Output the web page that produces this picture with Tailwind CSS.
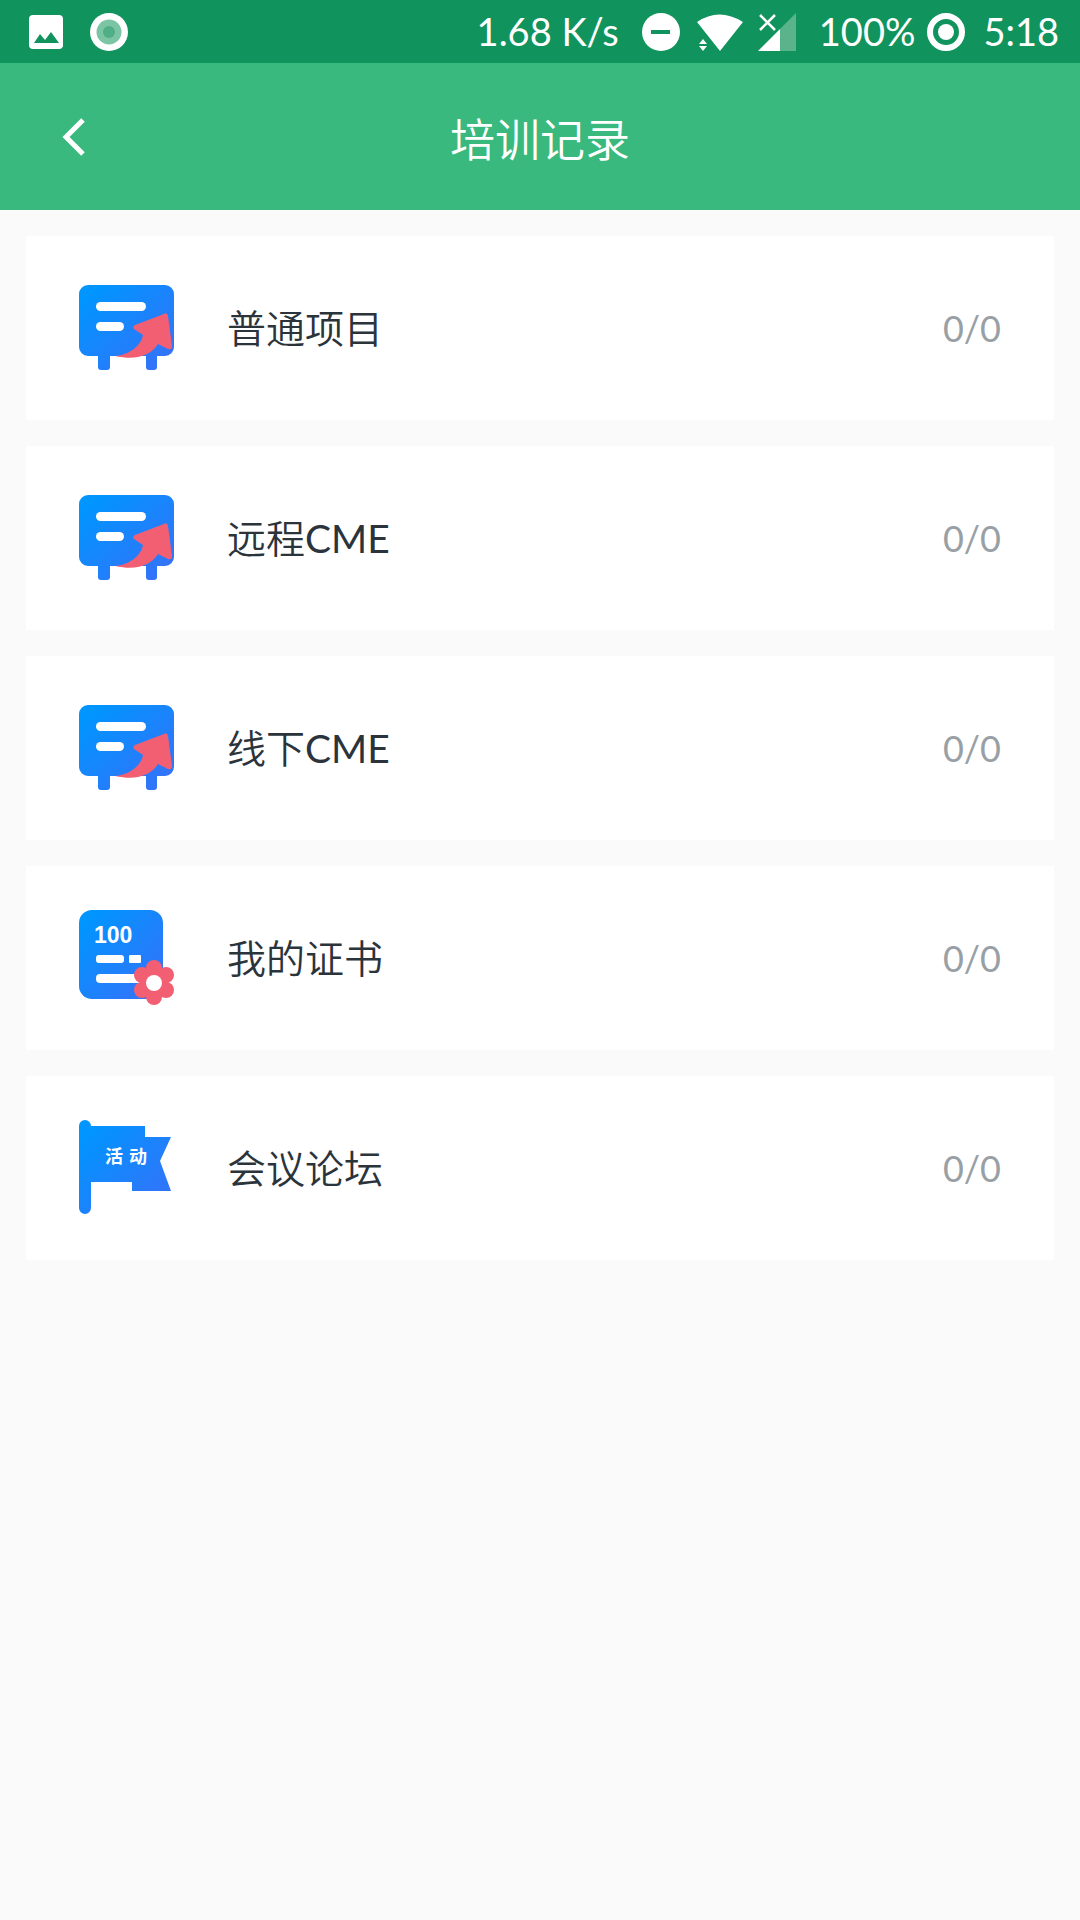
<!DOCTYPE html>
<html lang="zh-CN">
<head>
<meta charset="utf-8">
<meta name="viewport" content="width=device-width, initial-scale=1">
<title>培训记录</title>
<script src="https://cdn.jsdelivr.net/npm/@tailwindcss/browser@4"></script>
</head>
<body class="min-h-screen bg-[#fafafa] font-['Lato','Noto_Sans_CJK_SC',sans-serif] text-[#2b333b]">
<svg class="absolute size-0" aria-hidden="true">
  <defs>
    <linearGradient id="blue" x1="0" y1="0" x2="1" y2="1"><stop offset="0.1" stop-color="#0095ff"/><stop offset="1" stop-color="#3a6ff8"/></linearGradient>
    <symbol id="board" viewBox="0 0 96 96">
      <path fill="url(#blue)" d="M9 5H86a9 9 0 0 1 9 9V67a9 9 0 0 1-9 9H78V87a3 3 0 0 1-3 3H70a3 3 0 0 1-3-3V76H31V87a3 3 0 0 1-3 3H22a3 3 0 0 1-3-3V76H9a9 9 0 0 1-9-9V14A9 9 0 0 1 9 5Z"/>
      <rect x="17" y="22" width="50" height="9" rx="4.500" fill="#fff"/>
      <rect x="17" y="42" width="28" height="9" rx="4.500" fill="#fff"/>
      <path fill="#f35f72" d="M85 34Q88 32 89 36L93 66Q93 70 89 69L79 64C72 75 58 81 36 76C50 75 62 66 64 55L55 49Q53 47 56 45Z"/>
    </symbol>
  </defs>
</svg>

<header class="text-white">
  <div class="flex h-[63px] items-center justify-between bg-[#11935d] pr-[21px] pl-7 text-[38px] leading-[63px]">
    <div class="flex items-center gap-[26px]">
      <svg class="size-9" viewBox="0 0 36 36" aria-label="图片"><rect x="1" y="1" width="34" height="34" rx="4" fill="#fff"/><path fill="#11935d" d="M6 29 12 20 17 26 23 18 31 29Z"/></svg>
      <svg class="size-[38px]" viewBox="0 0 38 38" aria-hidden="true"><circle cx="19" cy="19" r="19" fill="#fff"/><circle cx="19" cy="19" r="12.500" fill="#7cc5a4"/><circle cx="19" cy="19" r="6" fill="#4fae86"/></svg>
    </div>
    <div class="flex items-center">
      <span>1.68 K/s</span>
      <svg class="ml-[23px] size-[38px]" viewBox="0 0 38 38" aria-label="请勿打扰"><circle cx="19" cy="19" r="19" fill="#fff"/><path fill="#11935d" d="M9 17H28V21H9Z"/></svg>
      <svg class="ml-[17px] h-[38px] w-[46px]" viewBox="0 0 46 38" aria-label="无线网络"><path fill="#fff" d="M0 9Q22-6 46 9L23 38ZM6 26 10 31H2ZM2 33H10L6 38Z"/></svg>
      <svg class="ml-[15px] h-[38px] w-[38px]" viewBox="0 0 38 38" aria-label="无信号"><path fill="#5bb38c" d="M38 0V38H22V16Z"/><path fill="#fff" d="M0 38 22 16V38Z"/><path stroke="#fff" stroke-width="2.500" d="M2 2 17 17M17 2 2 17"/></svg>
      <span class="ml-[23px]">100%</span>
      <svg class="ml-3 size-[38px]" viewBox="0 0 38 38" aria-label="电池"><circle cx="19" cy="19" r="16" fill="none" stroke="#fff" stroke-width="6"/><circle cx="19" cy="19" r="8" fill="#fff"/></svg>
      <time class="ml-[18px]">5:18</time>
    </div>
  </div>
  <div class="grid h-[147px] grid-cols-[147px_1fr_147px] items-center bg-[#39b97e]">
    <button type="button" aria-label="返回" class="flex size-[147px] items-center justify-center">
      <svg class="size-12" viewBox="0 0 48 48" fill="none" stroke="#fff" stroke-width="5"><path d="M33 7 16 24 33 41"/></svg>
    </button>
    <h1 class="pt-2 text-center text-[45px] font-[350]">培训记录</h1>
  </div>
</header>

<main class="flex flex-col gap-[26px] p-[26px] text-[39px]">
  <a href="#common" class="flex h-[184px] items-center gap-[52px] bg-white px-[53px]">
    <svg class="size-24"><use href="#board"/></svg>
    <span class="flex-1 font-[350]">普通项目</span><span class="text-[36px] text-[#98a0a6]">0/0</span>
  </a>
  <a href="#remote" class="flex h-[184px] items-center gap-[52px] bg-white px-[53px]">
    <svg class="size-24"><use href="#board"/></svg>
    <span class="flex-1"><span class="font-[350]">远程</span>CME</span><span class="text-[36px] text-[#98a0a6]">0/0</span>
  </a>
  <a href="#offline" class="flex h-[184px] items-center gap-[52px] bg-white px-[53px]">
    <svg class="size-24"><use href="#board"/></svg>
    <span class="flex-1"><span class="font-[350]">线下</span>CME</span><span class="text-[36px] text-[#98a0a6]">0/0</span>
  </a>
  <a href="#certificates" class="flex h-[184px] items-center gap-[52px] bg-white px-[53px]">
    <svg class="size-24" viewBox="0 0 96 96">
      <rect width="84" height="89" rx="13" fill="url(#blue)"/>
      <text x="15" y="33" fill="#fff" font-family="Liberation Sans, sans-serif" font-weight="700" font-size="23">100</text>
      <g fill="#fff"><rect x="17" y="45" width="28" height="8" rx="3"/><rect x="50" y="45" width="12" height="8" rx="1"/><rect x="17" y="64" width="50" height="9" rx="4"/></g>
      <g fill="#f35f72"><circle cx="75" cy="73" r="14"/><circle cx="75" cy="58" r="8"/><circle cx="87" cy="65" r="8"/><circle cx="87" cy="80" r="8"/><circle cx="75" cy="87" r="8"/><circle cx="63" cy="80" r="8"/><circle cx="63" cy="65" r="8"/></g>
      <circle cx="75" cy="73" r="8" fill="#fff"/>
    </svg>
    <span class="flex-1 font-[350]">我的证书</span><span class="text-[36px] text-[#98a0a6]">0/0</span>
  </a>
  <a href="#forum" class="flex h-[184px] items-center gap-[52px] bg-white px-[53px]">
    <svg class="size-24" viewBox="0 0 96 96">
      <path fill="url(#blue)" d="M0 6a6 6 0 0 1 12 0H66V17H92L81 41 92 71H53V62H12V88a6 6 0 0 1-12 0Z"/>
      <text x="26" y="43" fill="#fff" font-family="Noto Sans CJK SC, sans-serif" font-weight="700" font-size="18"><tspan>活</tspan><tspan x="50">动</tspan></text>
    </svg>
    <span class="flex-1 font-[350]">会议论坛</span><span class="text-[36px] text-[#98a0a6]">0/0</span>
  </a>
</main>
</body>
</html>
